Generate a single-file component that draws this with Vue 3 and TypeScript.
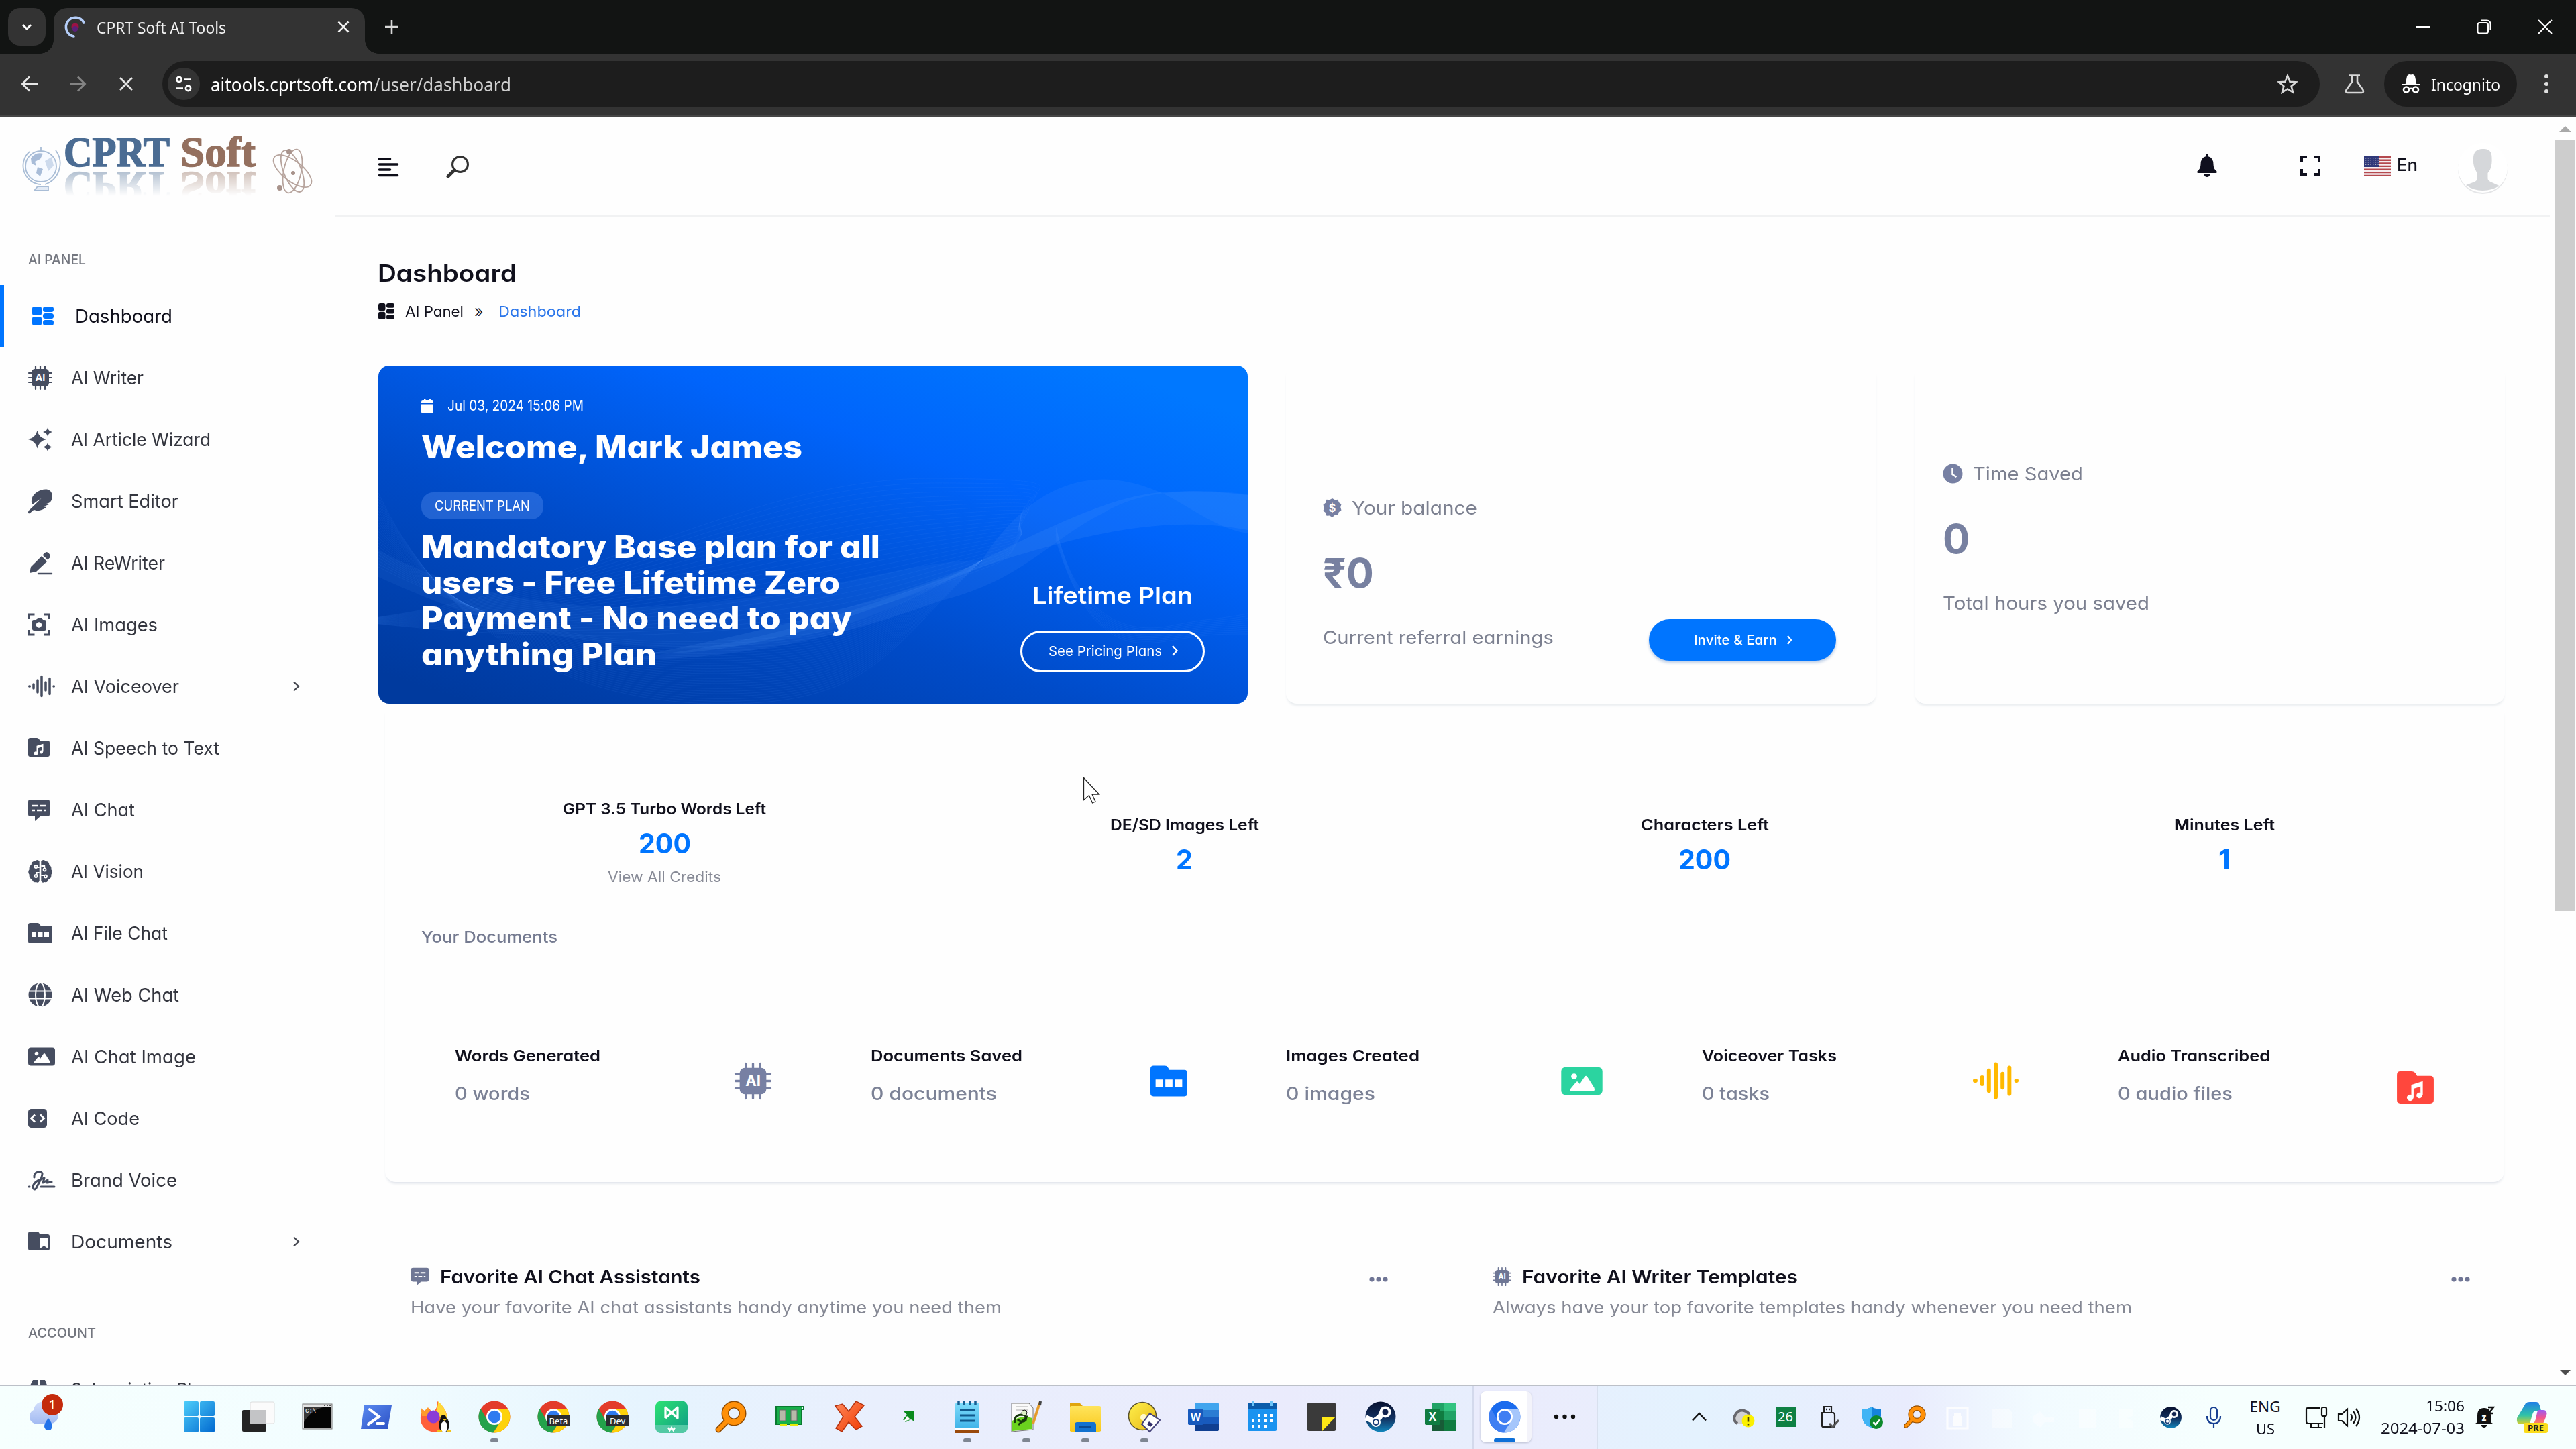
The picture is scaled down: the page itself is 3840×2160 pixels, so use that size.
<script setup lang="ts">
import type { Directive } from 'vue'

/* Stretches a line of text horizontally so that its glyphs span the given width. */
const vFit: Directive<HTMLElement, number> = {
  mounted(el, binding) {
    const range = document.createRange()
    range.selectNodeContents(el)
    const natural = range.getBoundingClientRect().width
    if (!natural) return
    el.style.width = `${binding.value}px`
    el.style.transform = `scaleX(${binding.value / natural})`
  },
}

const chip = (label: string) => `
  <rect x="5" y="5" width="26" height="26" rx="5" fill="currentColor"/>
  <path d="M11 1v34M18 1v34M25 1v34M1 11h34M1 18h34M1 25h34" stroke="currentColor" stroke-width="2.2" stroke-linecap="round"/>
  <text x="18" y="23.2" text-anchor="middle" font-family="Inter, sans-serif" font-size="14.5" font-weight="700" fill="#fff">${label}</text>`

const folder = '<path d="M3 3h10q2 0 3 1.5l1.500 2.500h11.500q3 0 3 3v18q0 3-3 3h-26q-3 0-3-3v-22q0-3 3-3z" fill="currentColor"/>'

const icons: Record<string, string> = {
  dashboard: '<g fill="currentColor"><rect x="6" y="4" width="14" height="13" rx="3"/><rect x="6" y="19" width="14" height="13" rx="3"/><rect x="22" y="4" width="16" height="8" rx="3.500"/><rect x="22" y="14" width="16" height="8" rx="3.500"/><rect x="22" y="24" width="16" height="8" rx="3.500"/></g>',
  chip: chip('AI'),
  sparkle: '<g fill="currentColor"><path d="M13.500 5q2.500 10.500 13.500 13q-11 2.500-13.500 13.500q-2.500-11-13.500-13.500q11-2.500 13.500-13z"/><path d="M29 .5q1 5 7 6.500q-6 1.500-7 6.500q-1-5-7-6.500q6-1.500 7-6.500z"/><path d="M29 23q1 5 7 6.500q-6 1.500-7 6.500q-1-5-7-6.500q6-1.500 7-6.500z"/></g>',
  feather: '<path d="M1 35l6-5c6 4 14 2 20-3l-4-1l8-3l-4-1c4-1 6-2 7.500-5c3-7 1-14-5-16c-9-2-21 4-24 13c-1 4-1 7 1 9q8-6 13-9q-6 6-18.500 18z" fill="currentColor"/><path d="M1.500 34.500L8 29" stroke="currentColor" stroke-width="3.500" stroke-linecap="round"/>',
  pencil: '<path d="M2 33l2-9L20 8l8 8L12 31zM21.500 6.500l3-3q3-3 6 0l1.500 2q2 2.500 0 5l-3 3z" fill="currentColor"/><path d="M15 34h20" stroke="currentColor" stroke-width="2.500" stroke-linecap="round"/>',
  camera: '<path d="M1.500 10V3h8M23 3h7.500v7M1.500 26v7h8M23 33h7.500v-7" fill="none" stroke="currentColor" stroke-width="3"/><path d="M8 11h4l2-3h6l2 3h2q3 0 3 3v9q0 4-3 4H9q-3 0-3-3V13q0-2 2-2z" fill="currentColor"/><circle cx="16" cy="18.500" r="4.200" fill="#fff"/>',
  wave: '<path d="M1.700 18h.6M8 15v6M14 9v18M20 3.500v29M26 12v12M32 6.500v23M38 18h.3" stroke="currentColor" stroke-width="3.500" stroke-linecap="round"/>',
  music: folder + '<path d="M13.500 26V15.500l8-2.500v10.500" fill="none" stroke="#fff" stroke-width="2"/><path d="M13.500 15.500l8-2.500v3l-8 2.500z" fill="#fff"/><circle cx="11.500" cy="26" r="2.800" fill="#fff"/><circle cx="19.500" cy="24" r="2.500" fill="#fff"/>',
  chat: '<path d="M3 3h26q3 0 3 3v19q0 3-3 3h-11l-8 7v-7h-7q-3 0-3-3v-19q0-3 3-3z" fill="currentColor"/><path d="M6 12h8M17 12h9M6 19h4M13 19h7M23 19h3" stroke="#fff" stroke-width="2.600"/>',
  brain: '<path d="M16.700 3q-3-4-7 0q-5 0-5 5q-4 3-3 7q-3 4 0 8q-1 5 4 7q1 5 6 4q4 2 5-2zM19.300 3q3-4 7 0q5 0 5 5q4 3 3 7q3 4 0 8q1 5-4 7q-1 5-6 4q-4 2-5-2z" fill="currentColor"/><path d="M16.700 12h-3M16.700 20h-4v3M19.300 10h5v4M19.300 24h5" stroke="#fff" stroke-width="1.800" fill="none"/><g fill="currentColor" stroke="#fff" stroke-width="1.800"><circle cx="11.500" cy="11" r="2"/><circle cx="11.500" cy="25" r="2"/><circle cx="24.500" cy="15.500" r="2"/><circle cx="26" cy="25.500" r="2"/></g>',
  file: '<path d="M3 3h11q2 0 3 1.500l1.500 2.500h14.500q3 0 3 3v20q0 3-3 3h-30q-3 0-3-3v-24q0-3 3-3z" fill="currentColor"/><path d="M5 16.500h7v7.500h-7zM14.500 16.500h7v7.500h-7zM24 16.500h7v7.500h-7z" fill="#fff"/>',
  globe: '<circle cx="18" cy="18" r="17.500" fill="currentColor"/><ellipse cx="18" cy="18" rx="7" ry="18" fill="none" stroke="#fff" stroke-width="2"/><path d="M0 12.500h36M0 23.500h36" stroke="#fff" stroke-width="2"/>',
  image: '<rect y="4.500" width="40" height="27" rx="4" fill="currentColor"/><path d="M9.500 28q-2-1 0-3l5-6q1-1 2 0l1.500 2l5-7.500q1-1 2 0l7 11q1 3-1 3.500z" fill="#fff"/><circle cx="12.500" cy="13.500" r="2.800" fill="#fff"/>',
  code: '<rect y="4" width="28" height="28" rx="4.500" fill="currentColor"/><path d="M10 12.500l-5.500 5.500l5.500 5.500M18 12.500l5.500 5.500l-5.500 5.500" fill="none" stroke="#fff" stroke-width="2.800"/>',
  sign: '<path d="M1 28h1M19 28h20M9 14c-1-8 10-11 12-6c1 5-5 14-9 22c-3 5-6 0-4-5c3-6 10-8 16-10l-2 7l7-4l-1 4l7-1" fill="none" stroke="currentColor" stroke-width="3" stroke-linecap="round" stroke-linejoin="round"/>',
  docs: folder + '<path d="M18 13h11v15l-5.500-4l-5.500 4z" fill="#fff"/>',
  box: '<path d="M7 4h8v10H2zM17 4h8l4 10H17zM1 16h29v16H1z" fill="currentColor"/>',
}

interface Nav { icon: string; label: string; width: number; more?: boolean }
const nav: Nav[] = [
  { icon: 'dashboard', label: 'Dashboard', width: 145 },
  { icon: 'chip', label: 'AI Writer', width: 108 },
  { icon: 'sparkle', label: 'AI Article Wizard', width: 208 },
  { icon: 'feather', label: 'Smart Editor', width: 160 },
  { icon: 'pencil', label: 'AI ReWriter', width: 140 },
  { icon: 'camera', label: 'AI Images', width: 129 },
  { icon: 'wave', label: 'AI Voiceover', width: 161, more: true },
  { icon: 'music', label: 'AI Speech to Text', width: 221 },
  { icon: 'chat', label: 'AI Chat', width: 95 },
  { icon: 'brain', label: 'AI Vision', width: 108 },
  { icon: 'file', label: 'AI File Chat', width: 144 },
  { icon: 'globe', label: 'AI Web Chat', width: 161 },
  { icon: 'image', label: 'AI Chat Image', width: 186 },
  { icon: 'code', label: 'AI Code', width: 102 },
  { icon: 'sign', label: 'Brand Voice', width: 158 },
  { icon: 'docs', label: 'Documents', width: 151, more: true },
]

const planLines = [
  { text: 'Mandatory Base plan for all', width: 684 },
  { text: 'users - Free Lifetime Zero', width: 624 },
  { text: 'Payment - No need to pay', width: 642 },
  { text: 'anything Plan', width: 351 },
]

const credits = [
  { label: 'GPT 3.5 Turbo Words Left', width: 303, value: '200', vw: 78, link: true },
  { label: 'DE/SD Images Left', width: 222, value: '2', vw: 25 },
  { label: 'Characters Left', width: 191, value: '200', vw: 78 },
  { label: 'Minutes Left', width: 150, value: '1', vw: 18 },
]

const docs = [
  { label: 'Words Generated', w: 217, value: '0 words', vw: 112, icon: 'chip', box: '0 0 36 36', iw: 55, ih: 55, shift: 2, color: '#7780a3' },
  { label: 'Documents Saved', w: 226, value: '0 documents', vw: 188, icon: 'file', box: '0 3 36 30', iw: 55, ih: 47, shift: 3, color: '#0075ff' },
  { label: 'Images Created', w: 199, value: '0 images', vw: 133, icon: 'image', box: '0 4 40 28', iw: 62, ih: 43, shift: -1, color: '#2bd4a0' },
  { label: 'Voiceover Tasks', w: 201, value: '0 tasks', vw: 101, icon: 'wave', box: '0 1.5 40 33', iw: 68, ih: 56, shift: -4, color: '#ffb900' },
  { label: 'Audio Transcribed', w: 227, value: '0 audio files', vw: 171, icon: 'music', box: '0 3 32 28', iw: 55, ih: 48, shift: 2, color: '#ff473d', low: true },
]

const favorites = [
  { icon: 'chat', box: '0 2 32 34', title: 'Favorite AI Chat Assistants', w: 388, sub: 'Have your favorite AI chat assistants handy anytime you need them', sw: 881 },
  { icon: 'chip', box: '0 0 36 36', title: 'Favorite AI Writer Templates', w: 411, sub: 'Always have your top favorite templates handy whenever you need them', sw: 953 },
]

/* Hairline ribbons behind the welcome text: curves blended between two edges. */
type Curve = number[]
const blend = (a: Curve, b: Curve, n: number): string[] =>
  Array.from({ length: n }, (_, i) => {
    const p = a.map((v, k) => (v + ((b[k] - v) * i) / (n - 1)).toFixed(1))
    return `M${p[0]} ${p[1]}C${p.slice(2, 8).join(' ')}S${p.slice(8).join(' ')}`
  })
const ribbons = [
  ...blend([0, 375, 330, 330, 560, 165, 831, 168, 930, 180, 960, 250], [0, 385, 330, 420, 640, 400, 800, 340, 930, 300, 960, 250], 26),
  ...blend([0, 190, 90, 380, 260, 500, 500, 504, 760, 420, 900, 290], [0, 300, 160, 380, 300, 420, 520, 410, 740, 370, 900, 290], 26),
  ...blend([1010, 240, 1040, 380, 1120, 400, 1180, 388, 1240, 380, 1296, 370], [1010, 260, 1060, 420, 1120, 420, 1180, 410, 1250, 400, 1296, 400], 10),
]

const chromeDisc = (red: string, green: string, yellow: string, dot: string) => `
  <circle cx="24" cy="24" r="23.500" fill="${red}"/>
  <path d="M3.600 12.300A23.500 23.500 0 0 0 22.500 47.500L34 30H14z" fill="${green}"/>
  <path d="M24 13h20.700A23.500 23.500 0 0 1 22.500 47.500L34.500 29z" fill="${yellow}"/>
  <circle cx="24" cy="24" r="12" fill="#fff"/><circle cx="24" cy="24" r="9.300" fill="${dot}"/>`
const chrome = chromeDisc('#e33b2a', '#24a24a', '#fdd20a', '#2f7bf0')
const tag = (text: string) => `<rect x="15" y="22" width="33" height="16" fill="#2b2d31"/><text x="31.500" y="34.500" text-anchor="middle" font-family="Noto Sans, sans-serif" font-size="13" fill="#fff">${text}</text>`
const steam = '<circle cx="24" cy="24" r="22.500" fill="url(#steam)"/><path d="M2 25l12 6l9-7l6-12" stroke="#fff" stroke-width="8" fill="none" stroke-linejoin="round"/><circle cx="31" cy="17" r="8.500" fill="#fff"/><circle cx="31" cy="17" r="5" fill="#12224e" stroke="#fff"/><circle cx="17" cy="32" r="7" fill="#fff"/><circle cx="17" cy="32" r="4" fill="none" stroke="#1b3f78" stroke-width="2"/>'
const lens = '<circle cx="29" cy="19" r="13" fill="none" stroke="#8f4a00" stroke-width="11"/><path d="M20 29L6 43" stroke="#8f4a00" stroke-width="9" stroke-linecap="round"/><circle cx="29" cy="19" r="13" fill="none" stroke="#ff9008" stroke-width="8"/><path d="M20 29L6 43" stroke="#ff9008" stroke-width="6" stroke-linecap="round"/>'

interface TaskApp { art: string; run?: boolean }
const apps: TaskApp[] = [
  { art: '<g fill="url(#win)"><rect x="1" y="1" width="22" height="22" rx="2"/><rect x="25" y="1" width="22" height="22" rx="2"/><rect x="1" y="25" width="22" height="22" rx="2"/><rect x="25" y="25" width="22" height="22" rx="2"/></g>' },
  { art: '<rect x="0" y="14" width="36" height="32" rx="2" fill="#242424"/><rect x="12" y="2" width="36" height="32" rx="2" fill="#fbfbfb" stroke="#ddd"/><path d="M12 14h24v20H14q-2 0-2-2z" fill="#c3c4c6"/>' },
  { art: '<rect x="2" y="5" width="44" height="37" fill="#e4e4e4" stroke="#777"/><rect x="4" y="9" width="40" height="31" fill="#050505"/><path d="M4 32Q14 14 36 9H4z" fill="#3a3a3a"/><text x="6" y="18" font-family="Liberation Mono, monospace" font-size="9" fill="#fff">C:\\_</text><path d="M34 7h2M38 7h2M42 7h2" stroke="#555" stroke-width="2"/>' },
  { art: '<path d="M6 7h41L41 42H1z" fill="url(#ps)"/><path d="M14 13l14 11L12 35M25 34h10" fill="none" stroke="#fff" stroke-width="4" stroke-linecap="round"/>' },
  { art: '<path d="M27 1q16 12 15 30q-3 14-17 16Q6 46 2 30Q1 20 6 14q5 4 9-2l4 5q8-2 8-16z" fill="#ff5f3a"/><path d="M2 10l5 6l6-6l5 7l-6 6H4z" fill="#ff9a2b"/><path d="M28 1q14 12 14 29l-9 12q2-18-9-25q4-6 4-16z" fill="#ffd83a"/><circle cx="21" cy="24" r="9.500" fill="#8a3bd6"/><ellipse cx="37" cy="36" rx="8" ry="11" fill="#111"/><ellipse cx="37" cy="39" rx="5" ry="8" fill="#fff"/><circle cx="36" cy="26" r="4.500" fill="#111"/><path d="M35 28l3 2l3-2zM27 43h7v4h-7zM41 43h6v4h-6z" fill="#f3c31c"/>' },
  { art: chrome, run: true },
  { art: chrome + tag('Beta') },
  { art: chrome + tag('Dev') },
  { art: '<rect width="48" height="48" rx="9" fill="url(#wise)"/><path d="M0 36h48v3q0 9-9 9H9q-9 0-9-9z" fill="#53c9a4"/><path d="M15 26V10l18 16V10L15 26" fill="none" stroke="#fff" stroke-width="3.200" stroke-linejoin="round"/><path d="M19 40l2.500 4l2.500-4l2.500 4l2.500-4" fill="none" stroke="#fff" stroke-width="2.500"/>' },
  { art: lens },
  { art: '<path d="M4 9h38v26H4z" fill="#16b04a"/><path d="M4 9h41v4h-3v22H4z" fill="none" stroke="#0a7a30" stroke-width="2"/><rect x="9" y="14" width="9" height="16" fill="#b7b9a9" stroke="#666"/><rect x="26" y="14" width="9" height="16" fill="#b7b9a9" stroke="#666"/><path d="M10 36h10M24 36h12" stroke="#e8e80a" stroke-width="3"/>' },
  { art: '<path d="M3 8l11-3l9 11L34 1l12 6l-14 17l11 14l-9 5l-11-11L13 46L4 41l11-17z" fill="url(#xred)" stroke="#b43210" stroke-width="1.500"/>' },
  { art: '<path d="M17 16h16v15l-5-3l-8 4l-4-4l6-7z" fill="#0a8a1d"/><path d="M17 31l5-8l5 5z" fill="#fff"/>' },
  { art: '<rect x="6" y="3" width="36" height="39" rx="2" fill="url(#note)"/><path d="M6 41h36v2H6z" fill="#fff"/><path d="M6 44h36v4H6z" fill="#9a4a0c"/><path d="M13 14h22M13 22h22M13 30h22" stroke="#11598c" stroke-width="3"/><path d="M11 0v6M19 0v6M28 0v6M36 0v6" stroke="#165e92" stroke-width="3.500"/>', run: true },
  { art: '<path d="M2 4h26l6 7v32l-32 3z" fill="#fafafa" stroke="#777"/><path d="M3 30q14-9 30-4v16L3 45z" fill="#6bd21e"/><path d="M8 9h18M8 14h18" stroke="#aaa"/><path d="M7 33q-2-11 9-12q10 0 7 8q-6 5-12-1M12 36l14-13" fill="none" stroke="#16380b" stroke-width="3"/><circle cx="21" cy="18" r="4" fill="#dff2c7" stroke="#222"/><path d="M44 3L34 34" stroke="#e59b2b" stroke-width="4"/><path d="M45 1l-1 6" stroke="#444" stroke-width="4"/>', run: true },
  { art: '<path d="M1 4h15l5 5h26v36H1z" fill="#e0a50d"/><rect x="1" y="8" width="46" height="38" rx="2" fill="url(#fold)"/><path d="M8 46V36q0-4 4-4h24q4 0 4 4v10z" fill="#1272d0"/><path d="M15 39h18" stroke="#0a4a92" stroke-width="2.500"/>', run: true },
  { art: '<circle cx="21" cy="23" r="20.500" fill="url(#disc)" stroke="#59512c" stroke-width="1.500"/><circle cx="23" cy="25" r="5" fill="#fff8cc"/><path d="M32 19l15 10l-15 17l-12-11z" fill="#fff" stroke="#44427a" stroke-width="2"/><path d="M31 31l6 4l-4 4l-5-4z" fill="#33306c"/>', run: true },
  { art: '<path d="M12 3h33q2 0 2 2v9H12z" fill="#41a5ee"/><path d="M12 14h35v10H12z" fill="#2b7cd3"/><path d="M12 24h35v10H12z" fill="#185abd"/><path d="M12 34h35v9q0 2-2 2H12z" fill="#103f91"/><rect x="1" y="12" width="23" height="24" rx="2" fill="#185abd"/><text x="12.500" y="30" text-anchor="middle" font-family="Open Sans, sans-serif" font-size="16" font-weight="700" fill="#fff">W</text>' },
  { art: '<rect x="2" y="3" width="43" height="42" rx="2" fill="#1b93f0"/><path d="M2 4h43v9H2z" fill="#0b5cab"/><path d="M10 0v8M37 0v8" stroke="#6cc4f8" stroke-width="4"/><path d="M17 20h4v4h-4zM26 20h4v4h-4zM35 20h4v4h-4zM8 28h4v4H8zM17 28h4v4h-4zM26 28h4v4h-4zM35 28h4v4h-4zM8 36h4v4H8zM17 36h4v4h-4zM26 36h4v4h-4z" fill="#fff"/>' },
  { art: '<rect x="3" y="3" width="42" height="42" rx="2" fill="#3a3a3a"/><path d="M24 24h21L25 45h-1z" fill="#ffe815"/>' },
  { art: steam },
  { art: '<path d="M12 3h18v12H12z" fill="#21a366"/><path d="M30 3h17v12H30z" fill="#33c481"/><path d="M12 15h18v14H12z" fill="#107c41"/><path d="M30 15h17v14H30z" fill="#21a366"/><path d="M12 29h18v16H12z" fill="#185c37"/><path d="M30 29h17v16H30z" fill="#107c41"/><rect x="1" y="12" width="23" height="24" rx="2" fill="#107c41"/><text x="12.500" y="30" text-anchor="middle" font-family="Open Sans, sans-serif" font-size="17" font-weight="700" fill="#fff">X</text>' },
]
const chromium = chromeDisc('#1a6bee', '#3f7ff2', '#a5c6fb', '#3f7ef3')
</script>

<template>
  <div class="screen">
    <svg class="defs" width="0" height="0">
      <defs>
        <linearGradient id="win" gradientUnits="userSpaceOnUse" x1="0" y1="0" x2="48" y2="48"><stop stop-color="#4fd0fb" /><stop offset="1" stop-color="#0067cf" /></linearGradient>
        <linearGradient id="ps" x1="0" y1="0" x2="1" y2="1"><stop stop-color="#5a8af0" /><stop offset="1" stop-color="#2b50c4" /></linearGradient>
        <linearGradient id="wise" x1="0" y1="0" x2="1" y2="1"><stop stop-color="#2de372" /><stop offset="1" stop-color="#0f9a86" /></linearGradient>
        <linearGradient id="xred" x1="0" y1="0" x2="1" y2="1"><stop stop-color="#ff8a5c" /><stop offset="1" stop-color="#f03800" /></linearGradient>
        <linearGradient id="note" x1="0" y1="0" x2="0" y2="1"><stop stop-color="#7fdcfa" /><stop offset="1" stop-color="#3fb2e8" /></linearGradient>
        <linearGradient id="fold" x1="0" y1="0" x2="0" y2="1"><stop stop-color="#ffe45c" /><stop offset="1" stop-color="#f8c81c" /></linearGradient>
        <linearGradient id="disc" x1="0" y1="0" x2="1" y2="1"><stop stop-color="#fff04d" /><stop offset="1" stop-color="#e7b916" /></linearGradient>
        <linearGradient id="steam" x1="0" y1="0" x2="0" y2="1"><stop stop-color="#07102f" /><stop offset=".55" stop-color="#12305f" /><stop offset="1" stop-color="#1186bd" /></linearGradient>
        <linearGradient id="cloud" x1="0" y1="0" x2="0" y2="1"><stop stop-color="#d3dffb" /><stop offset="1" stop-color="#a3bbf2" /></linearGradient>
        <linearGradient id="copA" x1="0" y1="0" x2="0" y2="1"><stop stop-color="#1f7fe6" /><stop offset=".6" stop-color="#2fc3a8" /><stop offset="1" stop-color="#d7cf2c" /></linearGradient>
        <linearGradient id="copB" x1="0" y1="0" x2="0" y2="1"><stop stop-color="#9a5cf5" /><stop offset=".5" stop-color="#f2558f" /><stop offset="1" stop-color="#ff9750" /></linearGradient>
      </defs>
    </svg>

    <header class="tabs">
      <div class="tab-search"><svg width="20" height="14" viewBox="0 0 20 14"><path d="M4 4l6 6l6-6" fill="none" stroke="#fff" stroke-width="3" /></svg></div>
      <div class="tab">
        <svg class="favicon" width="32" height="34" viewBox="0 0 32 34"><circle cx="16" cy="17" r="5.500" fill="#9c1245" /><circle cx="16" cy="20" r="4" fill="#5a2078" /><path d="M29 11A14 14 0 1 0 14 31" fill="none" stroke="#b4cdf8" stroke-width="3.600" stroke-linecap="round" /></svg>
        <span class="tab-title"><span v-fit="193" class="t">CPRT Soft AI Tools</span></span>
        <svg width="18" height="18" viewBox="0 0 18 18"><path d="M1.500 1.500l15 15M16.500 1.500l-15 15" stroke="#f1f1f1" stroke-width="2.600" /></svg>
      </div>
      <svg class="plus" width="22" height="22" viewBox="0 0 22 22"><path d="M11 1v20M1 11h20" stroke="#d8d8d8" stroke-width="2.600" /></svg>
      <div class="window-controls">
        <svg width="22" height="22" viewBox="0 0 22 22"><path d="M1 11h20" stroke="#fff" stroke-width="2" /></svg>
        <svg width="22" height="22" viewBox="0 0 22 22"><rect x="1.500" y="5" width="15.500" height="15.500" rx="3" fill="none" stroke="#fff" stroke-width="2" /><path d="M6 1.500h9q5.500 0 5.500 5.500v9" fill="none" stroke="#fff" stroke-width="2" /></svg>
        <svg width="22" height="22" viewBox="0 0 22 22"><path d="M1 1l20 20M21 1L1 21" stroke="#fff" stroke-width="2" /></svg>
      </div>
    </header>

    <nav class="toolbar">
      <svg class="tool-icon" width="24" height="24" viewBox="0 0 24 24"><path d="M24 12H2M12 1.500L1.500 12L12 22.500" fill="none" stroke="#e6e6e6" stroke-width="2.800" /></svg>
      <svg class="tool-icon" width="24" height="24" viewBox="0 0 24 24"><path d="M0 12h22M12 1.500L22.500 12L12 22.500" fill="none" stroke="#838383" stroke-width="2.800" /></svg>
      <svg class="tool-icon stop" width="20" height="20" viewBox="0 0 20 20"><path d="M1 1l18 18M19 1L1 19" stroke="#e6e6e6" stroke-width="2.800" /></svg>
      <div class="omnibox">
        <div class="site-info"><svg width="26" height="26" viewBox="0 0 26 26"><g fill="none" stroke="#fff" stroke-width="2.600"><circle cx="6" cy="6.500" r="3.600" /><circle cx="19.500" cy="19.500" r="3.600" /><path d="M13 6.500h11M2 19.500h10" /></g></svg></div>
        <span class="url"><span v-fit="448" class="t">aitools.cprtsoft.com<i>/user/dashboard</i></span></span>
        <svg class="star" width="32" height="30" viewBox="0 0 32 30"><path d="M16 3l3.500 8.800l9.300.6l-7.200 6l2.400 9.100l-8-5l-8 5l2.400-9.100l-7.200-6l9.300-.6z" fill="none" stroke="#d8d8d8" stroke-width="2.600" /></svg>
      </div>
      <svg class="flask" width="30" height="30" viewBox="0 0 30 30"><path d="M7 2.500h16M11 3v9L2.500 24q-1.500 4 2 4h21q3.500 0 2-4L19 12V3" fill="none" stroke="#d8d8d8" stroke-width="2.600" /></svg>
      <div class="incognito">
        <svg width="30" height="28" viewBox="0 0 30 28"><path d="M1 15h28M8 13l2-10q1-3 5-1.500q4-1.500 5 1.500l2 10z" fill="#fff" stroke="#fff" stroke-width="2" /><g fill="none" stroke="#fff" stroke-width="2.600"><circle cx="8" cy="22.500" r="4" /><circle cx="22" cy="22.500" r="4" /><path d="M12 21.500q3-1.500 6 0" /></g></svg>
        <span class="inc-label"><span v-fit="103" class="t">Incognito</span></span>
      </div>
      <svg class="kebab" width="8" height="30" viewBox="0 0 8 30"><g fill="#e0e0e0"><circle cx="4" cy="4" r="3" /><circle cx="4" cy="15" r="3" /><circle cx="4" cy="26" r="3" /></g></svg>
    </nav>

    <div class="page">
      <aside class="sidebar">
        <div class="logo">
          <svg class="logo-globe" width="94" height="149" viewBox="-1 0 94 149">
            <g fill="none" stroke="#a9bdd6" stroke-width="1.800">
              <circle cx="60" cy="74" r="23" fill="#f7faff" /><path d="M82 50A33 33 0 0 1 66 101M60 45v6" /><path d="M55 104h16v6H50z" fill="#e2eaf5" /><path d="M43 52A28 28 0 0 0 60 101" />
            </g>
            <path d="M45 62q7-10 18-7l-4 8l-8 4l2 6l-7-3zM55 75l8 3l-4 11l-6-5z" fill="#a8bcd8" /><path d="M66 66l10-6l3 13l-8 8z" fill="#cddaec" />
          </svg>
          <svg class="wordmark" width="290" height="78" viewBox="0 0 290 78">
            <g font-family="Liberation Serif, serif" font-weight="700" font-size="63" stroke-width="1.600">
              <text x="1" y="74" textLength="158" lengthAdjust="spacingAndGlyphs" fill="#4b6c93" stroke="#4b6c93">CPRT</text>
              <text x="175" y="74" textLength="112" lengthAdjust="spacingAndGlyphs" fill="#94705f" stroke="#94705f">Soft</text>
            </g>
          </svg>
          <svg class="logo-atom" width="100" height="149" viewBox="383 0 100 149">
            <g fill="none" stroke="#b7a49d" stroke-width="1.800"><ellipse cx="435" cy="81" rx="13" ry="33" transform="rotate(12 435 81)" /><ellipse cx="435" cy="81" rx="13" ry="33" transform="rotate(-22 435 81)" /><ellipse cx="435" cy="81" rx="15" ry="34" transform="rotate(-52 435 81)" /></g>
            <g fill="#a8938c"><circle cx="430" cy="52" r="4" /><circle cx="436" cy="84" r="3" /><circle cx="416" cy="106" r="4" /></g>
          </svg>
        </div>
        <h6 class="group first"><span v-fit="86" class="t">AI PANEL</span></h6>
        <div v-for="(item, i) in nav" :key="item.label" class="nav-row" :class="{ active: i === 0 }">
          <svg class="nav-icon" width="40" height="36" viewBox="0 0 40 36" v-html="icons[item.icon]" />
          <span class="nav-label"><span v-fit="item.width" class="t">{{ item.label }}</span></span>
          <svg v-if="item.more" class="chev" width="11" height="16" viewBox="0 0 11 16"><path d="M2 1.500L9 8l-7 6.500" fill="none" stroke="#44464f" stroke-width="2.200" /></svg>
        </div>
        <h6 class="group second"><span v-fit="101" class="t">ACCOUNT</span></h6>
        <div class="nav-row"><svg class="nav-icon" width="40" height="36" viewBox="0 0 40 36" v-html="icons.box" /><span class="nav-label"><span v-fit="223" class="t">Subscription Plans</span></span></div>
      </aside>

      <main class="main">
        <div class="header">
          <svg class="menu" width="30" height="30" viewBox="0 0 30 30"><path d="M1.500 3h16M1.500 11h27M1.500 19h16M1.500 27.500h27" stroke="#0d0d18" stroke-width="3.600" stroke-linecap="round" /></svg>
          <svg class="search" width="36" height="36" viewBox="0 0 36 36"><circle cx="22" cy="14" r="11.500" fill="none" stroke="#333" stroke-width="3" /><path d="M13.500 22.500L4 32" stroke="#333" stroke-width="5" stroke-linecap="round" /></svg>
          <span class="spacer" />
          <svg class="bell" width="30" height="34" viewBox="0 0 30 34"><path d="M13.500 0h3v3q8 2 8 12q0 7 5.500 11q0 2-2 2H2q-2 0-2-2q5.500-4 5.500-11q0-10 8-12zM10.500 30h9q-1 4-4.500 4t-4.500-4z" fill="#10101e" /></svg>
          <svg class="full" width="30" height="30" viewBox="0 0 30 30"><path d="M2 10V2h8M20 2h8v8M28 20v8h-8M10 28H2v-8" fill="none" stroke="#10101e" stroke-width="4" /></svg>
          <svg class="flag" width="40" height="30" viewBox="0 0 40 30"><rect width="40" height="30" fill="#f6eef0" /><path d="M0 1.150h40M0 5.750h40M0 10.350h40M0 14.950h40M0 19.550h40M0 24.150h40M0 28.800h40" stroke="#b54a4f" stroke-width="2.300" /><rect width="23" height="16" fill="#30397a" /><path d="M2 3h20M2 6h20M2 9h20M2 12.500h20" stroke="#aab" stroke-width="1.200" stroke-dasharray="1.300 2.400" /></svg>
          <span class="lang"><span v-fit="31" class="t">En</span></span>
          <svg class="avatar" width="74" height="74" viewBox="0 0 74 74"><circle cx="37" cy="32" r="37" fill="#e4e5e7" /><circle cx="37" cy="30" r="37" fill="#fff" /><path d="M37 2q14-1 13.500 14q1 14-6 22v8q0 3 4 5l13 6Q51 64 37 64T12 56l13-5q4-2 4-5v-8q-7-9-6-22Q23 2 37 2z" fill="#d5d7da" /></svg>
        </div>

        <h1 class="title"><span v-fit="207" class="t">Dashboard</span></h1>
        <div class="crumbs">
          <svg width="24" height="24" viewBox="6 4 32 28" preserveAspectRatio="none" v-html="icons.dashboard" />
          <span class="crumb-a"><span v-fit="87" class="t">AI Panel</span></span>
          <span class="crumb-sep">»</span>
          <a class="crumb-b"><span v-fit="123" class="t">Dashboard</span></a>
        </div>

        <section class="cards">
          <article class="welcome">
            <svg class="waves" viewBox="0 0 1296 504" preserveAspectRatio="none">
              <path d="M895 298C960 190 1040 160 1110 172C1190 185 1230 240 1296 250V192C1200 180 1130 190 1080 220C1000 260 960 320 840 350C700 400 560 440 330 440C600 420 800 330 895 298z" fill="#5aa0ff" opacity=".12" />
              <path d="M880 300C1000 240 1100 190 1180 188C1230 186 1270 190 1296 193V245C1190 225 1080 240 900 300C700 380 560 430 400 430C560 400 760 350 880 300z" fill="#6aaaff" opacity=".12" />
              <path d="M0 275C120 340 300 380 520 350C700 330 800 290 900 290C760 380 600 430 420 420C220 410 100 360 0 315z" fill="#6aaaff" opacity=".07" />
              <path v-for="(d, i) in ribbons" :key="i" :d="d" fill="none" stroke="#5c9dff" stroke-width="1" opacity=".09" />
            </svg>
            <div class="welcome-left">
              <div class="date"><svg width="18" height="21" viewBox="0 0 18 21"><path d="M4 0h2.500v2h5V0H14v2h2q2 0 2 2v2H0V4q0-2 2-2h2zM0 7.500h18V19q0 2-2 2H2q-2 0-2-2z" fill="#fff" /></svg><span v-fit="203" class="t">Jul 03, 2024 15:06 PM</span></div>
              <h2 class="hello"><span v-fit="568" class="t">Welcome, Mark James</span></h2>
              <div class="badge"><span v-fit="142" class="t">CURRENT PLAN</span></div>
              <div class="plan"><div v-for="line in planLines" :key="line.text"><span v-fit="line.width" class="t">{{ line.text }}</span></div></div>
            </div>
            <div class="welcome-right">
              <div class="lifetime"><span v-fit="239" class="t">Lifetime Plan</span></div>
              <button class="pricing"><span v-fit="169" class="t">See Pricing Plans</span><svg width="11" height="18" viewBox="0 0 11 18"><path d="M2 2l6.500 7L2 16" fill="none" stroke="#fff" stroke-width="2.400" /></svg></button>
            </div>
          </article>

          <article class="panel balance">
            <div class="metric"><svg width="28" height="28" viewBox="0 0 28 28"><path d="M14 0l4 2.200l4.500-.4l1.300 4.200l3.700 2.800l-1.300 4.200l1.300 4.500l-3.700 2.800l-1.300 4.500l-4.500-.4L14 28l-4-2.600l-4.500.4l-1.300-4.500L.5 18.500L1.800 14L.5 9.500l3.700-3l1.300-4.700l4.500.4z" fill="#7780a3" /><text x="14" y="20" text-anchor="middle" font-family="Inter, sans-serif" font-size="16" font-weight="700" fill="#fff">$</text></svg><span v-fit="187" class="t">Your balance</span></div>
            <div class="amount"><span v-fit="76" class="t">₹0</span></div>
            <div class="balance-foot"><span class="note"><span v-fit="344" class="t">Current referral earnings</span></span>
              <button class="invite"><span v-fit="124" class="t">Invite &amp; Earn</span><svg width="10" height="16" viewBox="0 0 10 16"><path d="M2 2l5 6l-5 6" fill="none" stroke="#fff" stroke-width="2.200" /></svg></button>
            </div>
          </article>

          <article class="panel time">
            <div class="metric"><svg width="30" height="30" viewBox="0 0 30 30"><circle cx="15" cy="15" r="14.500" fill="#7780a3" /><path d="M14.500 7v9l6 4" fill="none" stroke="#fff" stroke-width="2.500" /></svg><span v-fit="164" class="t">Time Saved</span></div>
            <div class="amount">0</div>
            <div class="hours"><span v-fit="308" class="t">Total hours you saved</span></div>
          </article>
        </section>

        <section class="usage">
          <div class="credits">
            <div v-for="c in credits" :key="c.label" class="credit" :class="{ tall: c.link }">
              <div class="c-label"><span v-fit="c.width" class="t">{{ c.label }}</span></div>
              <div class="c-value"><span v-fit="c.vw" class="t">{{ c.value }}</span></div>
              <div v-if="c.link" class="c-link"><span v-fit="169" class="t">View All Credits</span></div>
            </div>
          </div>
          <h3 class="docs-title"><span v-fit="203" class="t">Your Documents</span></h3>
          <div class="docs">
            <div v-for="d in docs" :key="d.label" class="doc">
              <div class="doc-text"><div class="d-label"><span v-fit="d.w" class="t">{{ d.label }}</span></div><div class="d-value"><span v-fit="d.vw" class="t">{{ d.value }}</span></div></div>
              <div class="doc-icon" :class="{ low: d.low }" :style="{ marginLeft: d.shift + 'px' }"><svg :width="d.iw" :height="d.ih" :viewBox="d.box" :color="d.color" v-html="icons[d.icon]" /></div>
            </div>
          </div>
        </section>

        <section class="favorites">
          <article v-for="f in favorites" :key="f.title" class="fav">
            <div>
              <div class="fav-title"><svg width="28" height="28" :viewBox="f.box" v-html="icons[f.icon]" /><span v-fit="f.w" class="t">{{ f.title }}</span></div>
              <div class="fav-sub"><span v-fit="f.sw" class="t">{{ f.sub }}</span></div>
            </div>
            <svg class="more" width="28" height="8" viewBox="0 0 28 8"><g fill="#6f7595"><circle cx="4" cy="4" r="3.600" /><circle cx="14" cy="4" r="3.600" /><circle cx="24" cy="4" r="3.600" /></g></svg>
          </article>
        </section>
      </main>

      <div class="scrollbar">
        <svg width="18" height="9" viewBox="0 0 18 9"><path d="M9 0l9 9H0z" fill="#a9a9a9" /></svg>
        <div class="thumb" />
        <svg class="down" width="16" height="8" viewBox="0 0 16 8"><path d="M0 0h16l-8 8z" fill="#4d4d4d" /></svg>
      </div>
    </div>

    <footer class="taskbar">
      <div class="weather">
        <svg width="60" height="60" viewBox="0 0 60 60"><path d="M13 46a11 11 0 0 1-1-20a13 13 0 0 1 25-4a12 12 0 0 1 0 24z" fill="url(#cloud)" /><path d="M34 38q6 8 6 12a6 6 0 0 1-12 0q0-4 6-12z" fill="#2373ea" /><circle cx="40" cy="18" r="16" fill="#c42b0c" /><text x="40" y="25" text-anchor="middle" font-family="Noto Sans, sans-serif" font-size="20" fill="#fff">1</text></svg>
      </div>
      <div class="apps">
        <div v-for="(a, i) in apps" :key="i" class="app"><svg width="48" height="48" viewBox="0 0 48 48" v-html="a.art" /><i :class="{ run: a.run }" /></div>
      </div>
      <div class="current">
        <div class="tile"><svg width="48" height="48" viewBox="0 0 48 48" v-html="chromium" /><i /></div>
        <svg class="ellipsis" width="32" height="8" viewBox="0 0 32 8"><g fill="#111"><circle cx="4" cy="4" r="3.200" /><circle cx="16.500" cy="4" r="3.200" /><circle cx="29" cy="4" r="3.200" /></g></svg>
      </div>
      <div class="tray">
        <svg class="caret" width="22" height="14" viewBox="0 0 22 14"><path d="M1 12.500L11 2l10 10.500" fill="none" stroke="#111" stroke-width="2.400" /></svg>
        <svg class="cloud" width="34" height="30" viewBox="0 0 34 30"><path d="M8 24q-8-5-3-13q5-8 13-6q7 2 8 8L16 25z" fill="#cfcfd2" /><path d="M8 24q-8-5-3-13q5-8 13-6q7 2 8 8" fill="none" stroke="#68686e" stroke-width="4" /><circle cx="24" cy="20" r="9.500" fill="#fbf000" /><path d="M24 14.500v7M24 24v2.500" stroke="#4a4400" stroke-width="2.600" /></svg>
        <div class="sheet">26</div>
        <svg class="usb" width="30" height="34" viewBox="0 0 30 34"><g fill="none" stroke="#222" stroke-width="2.200"><path d="M6 11V2h11v9M3 11h17q2 1 2 3v16q0 2-2 2H5q-2 0-2-2z" /><path d="M14 27l5 5l9-10" stroke="#555" stroke-width="3" /></g><path d="M9 6h2M13 6h2" stroke="#222" stroke-width="2.500" /></svg>
        <svg class="shield" width="34" height="34" viewBox="0 0 34 34"><path d="M16 1q5 4 14 4v9q0 14-14 18Q2 28 2 14V5q9 0 14-4z" fill="#1583dc" /><path d="M16 1v31Q2 28 2 14V5q9 0 14-4z" fill="#41b4f5" /><circle cx="23" cy="24" r="10" fill="#0d8a2c" /><path d="M18.500 24l3.500 3.500l6-7" fill="none" stroke="#fff" stroke-width="2.600" /></svg>
        <svg class="lens" width="34" height="34" viewBox="0 0 48 48" v-html="lens" />
        <svg class="ghosts" width="280" height="34" viewBox="0 0 280 34"><g opacity=".8"><rect x="2" y="2" width="30" height="30" fill="none" stroke="#fff" stroke-width="3" /><path d="M11 15h12v12H11zM13 15v-5h8v5" fill="#fff" stroke="#fff" stroke-width="2" /></g><path d="M68 4h26l5 5v23H68zM130 14l10-7l7 8h14v8h-14l-7 8l-10-8zM198 4h25v28h-25zM258 4h20v10l-8 3l8 4v11h-20z" fill="#fff" opacity=".4" /></svg>
        <svg class="steam" width="34" height="34" viewBox="0 0 48 48" v-html="steam" />
        <svg class="mic" width="24" height="34" viewBox="0 0 24 34"><g fill="none" stroke="#173f91" stroke-width="2.200"><rect x="7" y="2" width="10" height="19" rx="5" /><path d="M2 15q0 11 10 11t10-11M12 26v7" /></g></svg>
        <div class="lang-box"><span v-fit="46" class="t">ENG</span><span v-fit="28" class="t">US</span></div>
        <svg class="net" width="34" height="34" viewBox="0 0 34 34"><g fill="none" stroke="#111" stroke-width="2.200"><path d="M22 3H4Q2 3 2 5v18q0 3 3 3h22M9 26v6M20 26v6M7 32h18" /><rect x="25" y="2" width="7" height="13" rx="2" /><path d="M29 15v18" /></g></svg>
        <svg class="vol" width="34" height="30" viewBox="0 0 34 30"><g fill="none" stroke="#111" stroke-width="2.200"><path d="M2 10h5l8-7v24l-8-7H2zM20 10q4 5 0 10M24 6q7 9 0 18M28 2q10 13 0 26" /></g></svg>
        <div class="clock"><span v-fit="58" class="t">15:06</span><span v-fit="125" class="t">2024-07-03</span></div>
        <svg class="dnd" width="28" height="32" viewBox="0 0 28 32"><path d="M3 23V13Q3 2 13 2q10 0 10 11v10l3 2v1H0v-1zM8 27h10q-2 4-5 4t-5-4z" fill="#111" /><text x="13" y="21" text-anchor="middle" font-family="Noto Sans, sans-serif" font-size="14" font-weight="700" fill="#fff">z</text><path d="M19 1h8l-7 9h7" fill="none" stroke="#111" stroke-width="2.400" /></svg>
        <svg class="copilot" width="48" height="48" viewBox="0 0 48 48"><path d="M14 3q2-2 6-2h10q4 0 6 9l1 4h-7q-5 0-6 6l-3 10q-1 4-6 4H6q-6 0-5-9z" fill="url(#copA)" /><path d="M34 13h6q7 0 5 8l-4 10q-2 5-7 5H20l5-3q3-2 4-7l2-9q1-4 3-4z" fill="url(#copB)" /><rect x="11" y="32" width="36" height="15" rx="3" fill="#fbdc1b" /><text x="29" y="44" text-anchor="middle" font-family="Noto Sans, sans-serif" font-size="13" font-weight="700" fill="#222">PRE</text></svg>
      </div>
    </footer>

    <svg class="cursor" width="26" height="40" viewBox="0 0 26 40"><path d="M1.500 1.500v33l8-7l5 11.500l4.500-2l-5-11h10.500z" fill="#fff" stroke="#222" stroke-width="1.300" /></svg>
  </div>
</template>

<style>
html, body { margin: 0; background: #fefefe; }
</style>

<style scoped>
.screen { position: relative; width: 3840px; height: 2160px; overflow: hidden; display: flex; flex-direction: column; background: #fefefe; color: #10101c; font-family: Inter, "Liberation Sans", sans-serif; font-feature-settings: "cv11" 1, "calt" 0; }
.screen * { box-sizing: border-box; }
.defs { position: absolute; }
svg { flex: none; display: block; overflow: visible; }
.t { display: inline-block; white-space: nowrap; transform-origin: 0 50%; text-align: left; flex: none; }
h1, h2, h3, h6 { margin: 0; font-weight: 600; }
button { border: 0; font: inherit; color: inherit; padding: 0; }

.tabs { height: 80px; flex: none; background: #121413; display: flex; padding-top: 12px; font-family: "Noto Sans", sans-serif; color: #f1f1f1; }
.tab-search { width: 56px; height: 56px; margin-left: 12px; border-radius: 18px; background: #333; display: flex; align-items: center; justify-content: center; }
.tab { position: relative; margin-left: 12px; width: 464px; height: 68px; background: #333; border-radius: 20px 20px 0 0; display: flex; align-items: center; padding: 0 23px 12px 16px; }
.tab::before, .tab::after { content: ""; position: absolute; bottom: 0; width: 20px; height: 20px; }
.tab::before { left: -20px; background: radial-gradient(circle at 0 0, transparent 19.5px, #333 20px); }
.tab::after { right: -20px; background: radial-gradient(circle at 100% 0, transparent 19.5px, #333 20px); }
.tab-title { flex: 1; margin-left: 16px; font-size: 23.5px; line-height: 34px; padding-top: 1px; }
.plus { margin: 17px 0 0 29px; }
.window-controls { margin: 17px 35px 0 auto; display: flex; gap: 69px; }

.toolbar { height: 94px; flex: none; background: #333; border-bottom: 2px solid #454545; display: flex; align-items: center; padding: 0 40px 2px 32px; font-family: "Noto Sans", sans-serif; color: #fff; }
.tool-icon + .tool-icon { margin-left: 48px; }
.tool-icon.stop { margin-left: 50px; }
.omnibox { margin-left: 44px; width: 3216px; height: 68px; border-radius: 34px; background: #1d1d1d; display: flex; align-items: center; padding-left: 8px; }
.site-info { width: 48px; height: 48px; border-radius: 50%; background: #333; display: flex; align-items: center; justify-content: center; }
.url { margin-left: 16px; font-size: 28px; line-height: 40px; flex: 1; }
.url i { font-style: normal; color: #cfcfcf; }
.star { margin-right: 32px; }
.flask { margin-left: 37px; }
.incognito { margin-left: 29px; width: 198px; height: 68px; border-radius: 34px; background: #1d1d1d; display: flex; align-items: center; padding-left: 25px; }
.inc-label { margin-left: 15px; font-size: 24px; }
.kebab { margin-left: 40px; }

.page { height: 1890px; flex: none; overflow: hidden; display: flex; background: #fefefe; }
.sidebar { width: 500px; flex: none; }
.logo { height: 149px; display: flex; align-items: flex-start; }
.wordmark { -webkit-box-reflect: below 1px linear-gradient(transparent 50%, rgba(0, 0, 0, .45)); }
.group { padding-left: 42px; font-size: 19.5px; line-height: 30px; font-weight: 500; color: #73767f; }
.group.first { padding-top: 49px; padding-bottom: 23px; }
.group.second { padding-top: 75px; height: 128px; }
.nav-row { height: 92px; display: flex; align-items: center; padding-left: 42px; }
.nav-icon { color: #464d60; }
.nav-label { margin-left: 24px; width: 330px; font-size: 27.5px; line-height: 40px; color: #34363f; }
.nav-row.active { border-left: 6px solid #0075ff; padding-left: 36px; }
.active .nav-icon { color: #0075ff; }
.active .nav-label { margin-left: 30px; width: 324px; color: #10101c; }

.main { width: 3308px; flex: none; }
.header { height: 149px; border-bottom: 2px solid #f1f2f3; display: flex; align-items: flex-start; padding: 60px 63px 0 64px; margin-right: 7px; }
.search { margin: -3px 0 0 70px; }
.spacer { flex: 1; }
.bell { margin-top: -4px; }
.full { margin: -2px 0 0 124px; }
.flag { margin: -1px 0 0 65px; }
.lang { margin: -8px 0 0 9px; font-size: 25px; line-height: 40px; font-weight: 500; width: 33px; }
.avatar { margin: -14px 0 0 58px; }

.title { margin: 57px 0 0 63px; font-size: 35px; line-height: 54px; }
.crumbs { margin: 13px 0 0 64px; height: 34px; display: flex; align-items: center; font-size: 22px; line-height: 34px; }
.crumb-a { margin-left: 16px; }
.crumb-sep { margin-left: 16px; width: 18px; font-size: 25px; font-weight: 300; }
.crumb-b { margin-left: 18px; color: #2b76ea; }

.cards { margin: 64px 0 0 64px; display: grid; grid-template-columns: 1296px 880px 880px; column-gap: 57px; height: 504px; }
.welcome { position: relative; overflow: hidden; border-radius: 16px; display: flex; justify-content: space-between; padding: 44px 64px 47px; color: #fff; background: linear-gradient(19deg, #003a9e 5%, #004bc8 38%, #0064fb 68%, #0078ff 92%); }
.waves { position: absolute; inset: 0; width: 100%; height: 100%; }
.welcome-left, .welcome-right { position: relative; }
.date { display: flex; align-items: center; gap: 21px; font-size: 21px; line-height: 32px; }
.hello { margin-top: 15px; font-size: 46px; line-height: 60px; font-weight: 800; }
.badge { margin-top: 38px; width: 182px; height: 40px; border-radius: 18px; background: rgba(120, 170, 255, .28); font-size: 20px; line-height: 40px; text-align: center; }
.plan { margin-top: 15px; font-size: 46px; line-height: 53.2px; font-weight: 800; height: 213px; }
.welcome-right { align-self: flex-end; width: 275px; text-align: center; }
.lifetime { font-size: 34px; line-height: 50px; font-weight: 600; }
.pricing { margin-top: 27px; width: 275px; height: 62px; border: 3px solid #fff; border-radius: 31px; background: transparent; display: flex; align-items: center; justify-content: center; gap: 14px; font-size: 20.5px; padding: 0 0 2px 2px; }
.panel { border-radius: 16px; box-shadow: 0 4px 4px -2px #e0e5e9; background: #fefefe; }
.balance { padding: 192px 60px 0 55px; }
.time { padding: 141px 0 0 42px; }
.metric { display: flex; align-items: center; gap: 15px; font-size: 27.5px; line-height: 40px; color: #7c8090; }
.amount { margin-top: 42px; font-size: 60px; line-height: 70px; font-weight: 700; color: #7780a0; }
.balance-foot { margin-top: 34px; height: 62px; display: flex; align-items: center; justify-content: space-between; }
.note { font-size: 27.5px; line-height: 40px; color: #7c8090; margin-bottom: 8px; }
.invite { width: 279px; height: 62px; border-radius: 31px; background: #0075ff; color: #fff; display: flex; align-items: center; justify-content: center; gap: 14px; font-size: 20px; font-weight: 500; padding: 0 0 1px 3px; box-shadow: 0 3px 4px #b9cbe4; }
.hours { margin-top: 41px; font-size: 27.5px; line-height: 40px; color: #7c8090; }

.usage { margin: 1px 75px 0 74px; height: 712px; padding-top: 139px; border-radius: 16px; box-shadow: 0 4px 4px -2px #dde1e8; }
.credits { margin-left: 29px; width: 3101px; display: grid; grid-template-columns: repeat(4, 1fr); height: 134px; }
.credit { text-align: center; padding-top: 24px; }
.credit.tall { padding-top: 0; }
.c-label { font-size: 23px; line-height: 34px; font-weight: 600; }
.c-value { margin-top: 9px; font-size: 41px; line-height: 50px; font-weight: 700; color: #0075ff; }
.c-link { margin-top: 9px; font-size: 22px; line-height: 32px; color: #878a96; }
.docs-title { margin: 56px 0 0 54px; font-size: 23.5px; line-height: 36px; font-weight: 500; color: #747a90; }
.docs { margin: 142px 0 0 104px; display: grid; grid-template-columns: repeat(5, 619.7px); }
.doc { display: flex; }
.doc-text { width: 402px; }
.d-label { font-size: 23px; line-height: 34px; font-weight: 600; }
.d-value { margin-top: 20px; font-size: 27px; line-height: 40px; font-weight: 500; color: #7c8296; }
.doc-icon { width: 80px; height: 60px; margin-top: 24px; display: flex; align-items: center; justify-content: center; }
.doc-icon.low { margin-top: 34px; }
.favorites { margin: 121px 0 0 112px; display: grid; grid-template-columns: 1457px 1457px; column-gap: 156px; }
.fav { display: flex; justify-content: space-between; align-items: flex-start; }
.fav-title { display: flex; align-items: center; gap: 16px; font-size: 26.5px; line-height: 40px; font-weight: 600; }
.fav-title svg { color: #6f7795; }
.fav-sub { margin-top: 8px; font-size: 25px; line-height: 36px; color: #858894; }
.more { margin-top: 20px; }

.scrollbar { width: 32px; flex: none; display: flex; flex-direction: column; align-items: center; padding-top: 14px; }
.thumb { width: 30px; height: 1150px; margin-top: 11px; background: #cdcdcd; }
.down { margin-top: 684px; }

.taskbar { height: 96px; flex: none; border-top: 2px solid #bcc0c8; display: flex; background: linear-gradient(90deg, #f6fffe 0, #f2fdff 14%, #e6f4fe 25%, #e9effd 34%, #eaebfc 50%, #e4f2fe 66%, #e9ecfd 74%, #f2fbff 79%, #f6fffe 86%, #f6fffe 100%); font-family: "Noto Sans", sans-serif; }
.weather { width: 252.5px; padding: 10px 0 0 38px; flex: none; }
.apps { display: flex; flex: none; }
.app { width: 88.1px; display: flex; flex-direction: column; align-items: center; padding-top: 22px; }
.app i { width: 12px; height: 6px; margin-top: 8px; border-radius: 3px; }
.app i.run { background: #7e8692; }
.current { margin-left: 4px; width: 187px; flex: none; border-left: 2px solid #d3d9ec; border-right: 2px solid #d8e0ee; display: flex; padding: 8px 0 0 10px; background: rgba(238, 234, 252, .5); }
.tile { width: 76px; height: 76px; border-radius: 8px; background: #fff; box-shadow: 0 1px 3px #b9bdd0; padding: 14px 0 0 3px; display: flex; flex-direction: column; align-items: center; border-right: 6px solid #f3f3fa; }
.tile i { width: 32px; height: 6px; margin-top: 8px; border-radius: 3px; background: #0d6fd8; }
.ellipsis { margin: 34px 0 0 33px; }
.tray { flex: 1; display: flex; align-items: flex-start; padding-top: 29px; }
.caret { margin: 10px 0 0 140px; }
.cloud { margin: 3px 0 0 38px; }
.sheet { margin: 2px 0 0 31px; width: 30px; height: 30px; background: #0e8043; color: #fff; font-size: 20px; line-height: 30px; text-align: center; }
.usb { margin: 0 0 0 36px; }
.shield { margin: 1px 0 0 31px; }
.lens { margin: 0 0 0 29px; }
.ghosts { margin: 2px 0 0 30px; }
.steam { margin: 1px 0 0 38px; }
.mic { margin: 1px 0 0 35px; }
.lang-box { margin: -15px 0 0 38px; width: 54px; display: flex; flex-direction: column; align-items: center; font-size: 22.5px; line-height: 33px; }
.net { margin: 1px 0 0 32px; }
.vol { margin: 3px 0 0 14px; }
.clock { margin: -16px 0 0 28px; width: 128px; display: flex; flex-direction: column; align-items: flex-end; font-size: 22.5px; line-height: 33px; }
.dnd { margin: 2px 0 0 16px; }
.copilot { margin: -6px 0 0 33px; }

.cursor { position: absolute; left: 1614px; top: 1158px; }
</style>
